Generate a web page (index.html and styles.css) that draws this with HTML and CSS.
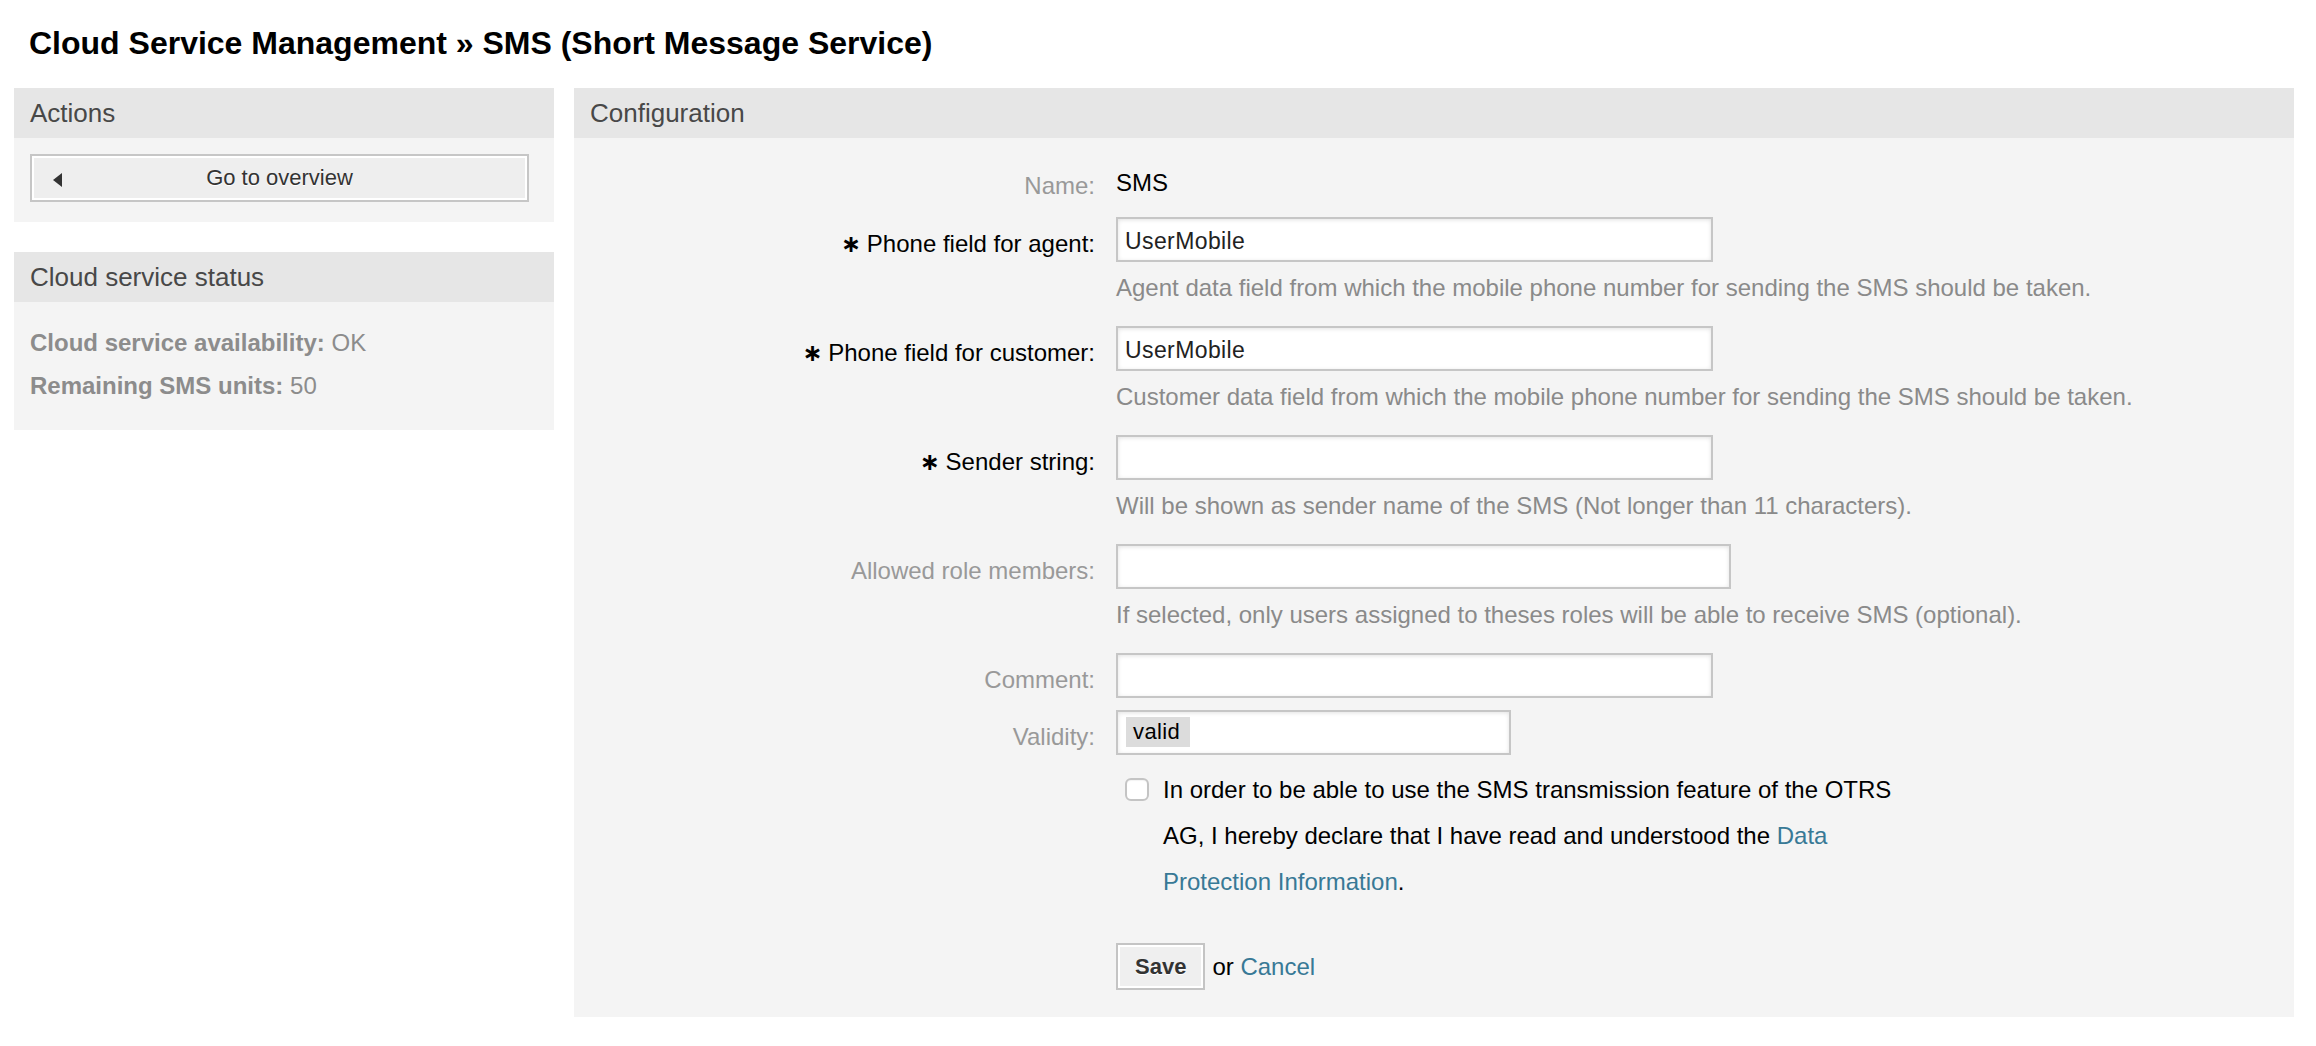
FILE: index.html
```html
<!DOCTYPE html>
<html lang="en">
<head>
<meta charset="utf-8">
<title>Cloud Service Management » SMS (Short Message Service)</title>
<link rel="stylesheet" href="styles.css">
</head>
<body>
<div class="page">
  <h1 class="page-title">Cloud Service Management » SMS (Short Message Service)</h1>
  <div class="layout">
    <aside class="sidebar">
      <section class="panel">
        <h2 class="panel-header">Actions</h2>
        <div class="panel-body actions-body">
          <a class="action-btn" href="#">
            <svg class="back-arrow" width="9" height="14" viewBox="0 0 9 14" aria-hidden="true"><polygon points="9,0 9,14 0,7"/></svg>
            <span class="action-label">Go to overview</span>
            <span class="action-spacer"></span>
          </a>
        </div>
      </section>
      <section class="panel">
        <h2 class="panel-header">Cloud service status</h2>
        <div class="panel-body status-body">
          <p class="status-line"><strong>Cloud service availability:</strong> OK</p>
          <p class="status-line"><strong>Remaining SMS units:</strong> 50</p>
        </div>
      </section>
    </aside>
    <main class="panel config">
      <h2 class="panel-header">Configuration</h2>
      <form class="panel-body form-body">
        <div class="row row-name">
          <label class="label">Name:</label>
          <div class="field"><span class="value">SMS</span></div>
        </div>
        <div class="row row-desc">
          <label class="label mandatory"><span class="marker">∗</span>Phone field for agent:</label>
          <div class="field">
            <input class="text-input" type="text" value="UserMobile">
            <p class="desc">Agent data field from which the mobile phone number for sending the SMS should be taken.</p>
          </div>
        </div>
        <div class="row row-desc">
          <label class="label mandatory"><span class="marker">∗</span>Phone field for customer:</label>
          <div class="field">
            <input class="text-input" type="text" value="UserMobile">
            <p class="desc">Customer data field from which the mobile phone number for sending the SMS should be taken.</p>
          </div>
        </div>
        <div class="row row-desc">
          <label class="label mandatory"><span class="marker">∗</span>Sender string:</label>
          <div class="field">
            <input class="text-input" type="text" value="">
            <p class="desc">Will be shown as sender name of the SMS (Not longer than 11 characters).</p>
          </div>
        </div>
        <div class="row row-desc">
          <label class="label">Allowed role members:</label>
          <div class="field">
            <div class="text-input wide-input"></div>
            <p class="desc">If selected, only users assigned to theses roles will be able to receive SMS (optional).</p>
          </div>
        </div>
        <div class="row row-plain">
          <label class="label">Comment:</label>
          <div class="field">
            <input class="text-input" type="text" value="">
          </div>
        </div>
        <div class="row row-plain">
          <label class="label">Validity:</label>
          <div class="field">
            <div class="text-input select-input"><span class="tag">valid</span></div>
          </div>
        </div>
        <div class="row row-check">
          <div class="label-empty"></div>
          <div class="field check-field">
            <input type="checkbox" class="checkbox">
            <p class="check-text">In order to be able to use the SMS transmission feature of the OTRS AG, I hereby declare that I have read and understood the <a href="#" class="link">Data</a> <a href="#" class="link">Protection Information</a>.</p>
          </div>
        </div>
        <div class="row row-submit">
          <div class="label-empty"></div>
          <div class="field submit-field">
            <button type="button" class="btn-save">Save</button>
            <span class="or-text">or <a href="#" class="link">Cancel</a></span>
          </div>
        </div>
      </form>
    </main>
  </div>
</div>
</body>
</html>
```

FILE: styles.css
```css
* {
  box-sizing: border-box;
}

html,
body {
  margin: 0;
  padding: 0;
  background: #ffffff;
}

body {
  font-family: "Liberation Sans", Arial, Helvetica, sans-serif;
  color: #000000;
}

.page {
  padding: 23px 22px 0 14px;
}

.page-title {
  margin: 0 0 25px 15px;
  font-size: 32px;
  line-height: 40px;
  font-weight: bold;
  color: #000000;
}

.layout {
  display: flex;
  align-items: flex-start;
  gap: 20px;
}

.sidebar {
  width: 540px;
  flex: none;
  display: flex;
  flex-direction: column;
  gap: 30px;
}

.panel {
  background: #f4f4f4;
}

.panel-header {
  margin: 0;
  height: 50px;
  padding: 0 16px;
  background: #e6e6e6;
  font-size: 26px;
  line-height: 50px;
  font-weight: normal;
  color: #484848;
}

/* Actions */
.actions-body {
  padding: 16px 25px 20px 16px;
}

.action-btn {
  display: grid;
  grid-template-columns: 1fr auto 1fr;
  align-items: center;
  height: 48px;
  background: #eeeeee;
  border: 2px solid #c6c6c6;
  box-shadow: inset 0 0 0 2px #ffffff;
  text-decoration: none;
  color: #333333;
  font-size: 22px;
  text-shadow: 0 1px 0 #ffffff;
}

.back-arrow {
  justify-self: start;
  margin: 4px 0 0 21px;
  fill: #333333;
}

.action-label {
  line-height: 26px;
}

/* Status */
.status-body {
  padding: 27px 16px 30px 16px;
}

.status-line {
  margin: 0;
  font-size: 24px;
  line-height: 28px;
  color: #8c8c8c;
}

.status-line + .status-line {
  margin-top: 15px;
}

.status-line strong {
  font-weight: bold;
}

/* Configuration */
.config {
  flex: 1;
  min-width: 0;
}

.form-body {
  padding: 31px 0 27px 0;
}

.row {
  display: grid;
  grid-template-columns: 521px 1fr;
  column-gap: 21px;
}

.label {
  display: block;
  text-align: right;
  font-size: 24px;
  line-height: 28px;
  padding-top: 13px;
  color: #999999;
}

.label.mandatory {
  color: #000000;
}

.marker {
  display: inline-block;
  width: 14px;
  margin-right: 12px;
  text-align: center;
  font-family: "DejaVu Sans", sans-serif;
  font-weight: bold;
  font-size: 24px;
}

.row-name {
  margin-bottom: 17px;
}

.row-name .label {
  padding-top: 3px;
}

.value {
  display: block;
  font-size: 24px;
  line-height: 28px;
  color: #000000;
}

.row-desc {
  margin-bottom: 24px;
}

.row-plain {
  margin-bottom: 12px;
}

.text-input {
  display: block;
  width: 597px;
  height: 45px;
  margin: 0;
  padding: 4px 7px 0 7px;
  border: 2px solid #c6c6c6;
  background: #ffffff;
  box-shadow: inset 0 1px 4px rgba(0, 0, 0, 0.12);
  font-family: "Liberation Sans", Arial, Helvetica, sans-serif;
  font-size: 23px;
  letter-spacing: 0.4px;
  color: #222222;
  outline: none;
}

.wide-input {
  width: 615px;
}

.select-input {
  width: 395px;
  padding: 5px 8px;
}

.tag {
  display: inline-block;
  height: 30px;
  padding: 0 10px 0 7px;
  background: #dcdcdc;
  font-size: 22px;
  line-height: 30px;
  color: #000000;
}

.desc {
  margin: 12px 0 0 0;
  font-size: 24px;
  line-height: 28px;
  color: #8a8a8a;
}

/* Checkbox */
.row-check {
  margin-bottom: 38px;
}

.check-field {
  display: flex;
  align-items: flex-start;
}

.checkbox {
  appearance: none;
  -webkit-appearance: none;
  flex: none;
  width: 24px;
  height: 23px;
  margin: 11px 0 0 9px;
  border: 2px solid #c4c4c4;
  border-radius: 6px;
  background: #ffffff;
  box-shadow: inset 0 1px 1px rgba(0, 0, 0, 0.05);
}

.check-text {
  margin: 0 0 0 14px;
  max-width: 750px;
  font-size: 24px;
  line-height: 46px;
  color: #000000;
}

.link {
  color: #387996;
  text-decoration: none;
}

/* Submit */
.submit-field {
  display: flex;
  align-items: center;
  gap: 7px;
}

.btn-save {
  height: 47px;
  margin: 0;
  padding: 0 17px;
  background: #efefef;
  border: 2px solid #c4c4c4;
  border-radius: 0;
  box-shadow: inset 0 0 0 2px #ffffff;
  font-family: "Liberation Sans", Arial, Helvetica, sans-serif;
  font-size: 22px;
  font-weight: bold;
  color: #333333;
  text-shadow: 0 1px 0 #ffffff;
}

.or-text {
  font-size: 24px;
  line-height: 28px;
  color: #000000;
}
```
